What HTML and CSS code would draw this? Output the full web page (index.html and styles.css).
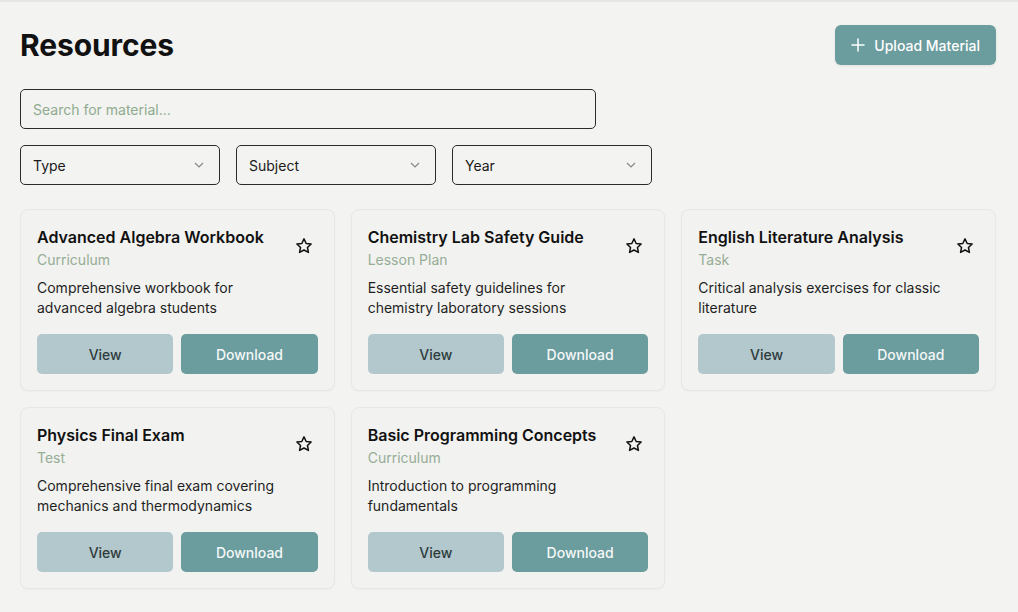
FILE: index.html
```html
<!DOCTYPE html>
<html lang="en">
<head>
    <meta charset="UTF-8">
    <meta name="viewport" content="width=device-width, initial-scale=1.0">
    <title>Resources</title>
    <link rel="stylesheet" href="styles.css">
</head>
<body>
    <div class="page">
        <header class="header">
            <h1>Resources</h1>
            <button class="btn-upload">
                <svg width="14" height="14" viewBox="0 0 14 14" fill="none" stroke="currentColor" stroke-width="1.5" stroke-linecap="round"><path d="M7 1v12M1 7h12"/></svg>
                Upload Material
            </button>
        </header>

        <input class="search" type="text" placeholder="Search for material...">

        <div class="filters">
            <div class="select">Type <svg width="12" height="8" viewBox="0 0 12 8" fill="none" stroke="currentColor" stroke-width="1.2"><path d="M2 2l4 4 4-4"/></svg></div>
            <div class="select">Subject <svg width="12" height="8" viewBox="0 0 12 8" fill="none" stroke="currentColor" stroke-width="1.2"><path d="M2 2l4 4 4-4"/></svg></div>
            <div class="select">Year <svg width="12" height="8" viewBox="0 0 12 8" fill="none" stroke="currentColor" stroke-width="1.2"><path d="M2 2l4 4 4-4"/></svg></div>
        </div>

        <div class="grid" id="grid"></div>
    </div>

    <script>
        // resource list
        const items = [
            { title: 'Advanced Algebra Workbook', type: 'Curriculum', desc: 'Comprehensive workbook for advanced algebra students' },
            { title: 'Chemistry Lab Safety Guide', type: 'Lesson Plan', desc: 'Essential safety guidelines for chemistry laboratory sessions' },
            { title: 'English Literature Analysis', type: 'Task', desc: 'Critical analysis exercises for classic literature' },
            { title: 'Physics Final Exam', type: 'Test', desc: 'Comprehensive final exam covering mechanics and thermodynamics' },
            { title: 'Basic Programming Concepts', type: 'Curriculum', desc: 'Introduction to programming fundamentals' }
        ];

        const star = '<svg width="18" height="18" viewBox="0 0 24 24" fill="none" stroke="currentColor" stroke-width="2" stroke-linejoin="round"><path d="M12 2.5l2.9 6.1 6.6.8-4.9 4.6 1.3 6.6L12 17.3l-5.9 3.3 1.3-6.6-4.9-4.6 6.6-.8z"/></svg>';

        const grid = document.getElementById('grid');
        items.forEach(item => {
            const card = document.createElement('div');
            card.className = 'card';
            card.innerHTML = `
                <div class="card-top">
                    <div>
                        <h3>${item.title}</h3>
                        <div class="type">${item.type}</div>
                    </div>
                    <button class="fav">${star}</button>
                </div>
                <p>${item.desc}</p>
                <div class="actions">
                    <button class="btn btn-view">View</button>
                    <button class="btn btn-download">Download</button>
                </div>`;
            grid.appendChild(card);
        });
    </script>
</body>
</html>
```

FILE: styles.css
```css
body {
    margin: 0;
    background: #f3f3f1;
    font-family: 'Inter', 'Liberation Sans', sans-serif;
    color: #111;
    border-top: 2px solid #e6e6e4;
}

.page {
    padding: 23px 22px 20px 20px;
}

.header {
    display: flex;
    justify-content: space-between;
    align-items: center;
    margin-bottom: 24px;
}

h1 {
    margin: 0;
    font-size: 30px;
    font-weight: 700;
    letter-spacing: -0.1px;
}

.btn-upload {
    display: flex;
    align-items: center;
    gap: 9px;
    height: 40px;
    padding: 0 16px;
    background: #6b9c9e;
    color: #fff;
    border: none;
    border-radius: 6px;
    font-family: inherit;
    font-size: 14px;
    font-weight: 500;
    box-shadow: 0 1px 3px rgba(0, 0, 0, 0.08);
}

.search {
    display: block;
    box-sizing: border-box;
    width: 576px;
    height: 40px;
    padding: 0 12px;
    background: transparent;
    border: 1px solid #2b2b2b;
    border-radius: 5px;
    font-family: inherit;
    font-size: 14px;
    margin-bottom: 16px;
}

.search::placeholder {
    color: #8fab8f;
}

.filters {
    display: flex;
    gap: 16px;
    margin-bottom: 24px;
}

.select {
    box-sizing: border-box;
    width: 200px;
    height: 40px;
    padding: 0 14px 0 12px;
    border: 1px solid #2b2b2b;
    border-radius: 5px;
    display: flex;
    align-items: center;
    justify-content: space-between;
    font-size: 14px;
    color: #1a1a1a;
}

.select svg {
    color: #888;
}

.grid {
    display: grid;
    grid-template-columns: repeat(3, 1fr);
    gap: 16px;
}

.card {
    background: #f2f2f0;
    border: 1px solid #e7e7e5;
    border-radius: 8px;
    padding: 16px;
    box-shadow: 0 1px 2px rgba(0, 0, 0, 0.03);
}

.card-top {
    display: flex;
    justify-content: space-between;
    align-items: flex-start;
}

.card h3 {
    margin: 0;
    font-size: 16px;
    font-weight: 600;
    line-height: 22px;
}

.type {
    margin-top: 1px;
    font-size: 14px;
    line-height: 22px;
    color: #96ad96;
}

.fav {
    background: none;
    border: none;
    padding: 0;
    margin: 11px 5px 0 0;
    color: #111;
    line-height: 0;
}

.card p {
    margin: 7px 36px 16px 0;
    font-size: 14px;
    line-height: 20px;
    color: #1f1f1f;
}

.actions {
    display: grid;
    grid-template-columns: 1fr 1fr;
    gap: 8px;
}

.btn {
    height: 40px;
    border: none;
    border-radius: 5px;
    font-family: inherit;
    font-size: 14px;
    font-weight: 500;
}

.btn-view {
    background: #b2c8cc;
    color: #2e3b3c;
}

.btn-download {
    background: #6b9c9e;
    color: #f4f8f8;
}
```
